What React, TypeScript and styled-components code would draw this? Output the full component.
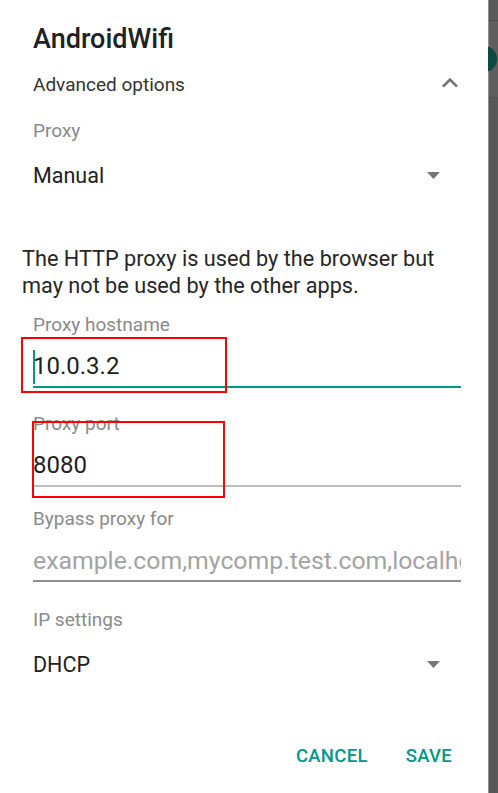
import React from 'react';
import styled, { createGlobalStyle } from 'styled-components';

const GlobalStyle = createGlobalStyle`
  html, body {
    margin: 0;
    padding: 0;
    overflow: hidden;
    background: #585858;
  }
  body {
    font-family: Roboto, "Noto Sans", "Liberation Sans", sans-serif;
  }
`;

const teal = '#009688';

const Page = styled.div`
  display: flex;
  width: 498px;
  height: 793px;
  overflow: hidden;
  background: linear-gradient(to right, #ffffff 0, #ffffff 488px, #8e8e8e 488px, #8e8e8e 489px, #585858 489px);
`;

const Dialog = styled.div`
  width: 488px;
  flex: none;
  background: #ffffff;
  padding: 20px 27px 0 33px;
  box-sizing: border-box;
  display: flex;
  flex-direction: column;
  position: relative;
  z-index: 2;
  overflow: hidden;
`;

const Backdrop = styled.div`
  flex: 1;
  min-width: 10px;
  position: relative;
  z-index: 1;
  border-left: 1px solid #8e8e8e;
  background-color: #585858;
  display: flex;
  flex-direction: column;
`;

const StatusBand = styled.div`
  height: 20px;
  background-color: #5a5a5a;
  border-bottom: 1px solid #4c4c4c;
`;

const ToolbarBand = styled.div`
  height: 76px;
  background-color: #5e5e5e;
  border-bottom: 1px solid #535353;
`;

// the FAB of the screen behind, mostly hidden by the dialog
const HiddenFab = styled.div`
  position: absolute;
  left: -18px;
  top: 46px;
  width: 26px;
  height: 26px;
  border-radius: 50%;
  background: #0b4a40;
`;

const Title = styled.div`
  height: 37px;
  display: flex;
  align-items: center;
  font-size: 27px;
  font-weight: 500;
  color: #212121;
`;

const Row = styled.div<{ $h: number }>`
  height: ${({ $h }) => $h}px;
  display: flex;
  align-items: center;
  justify-content: space-between;
`;

const SectionText = styled.span`
  font-size: 19px;
  color: #333333;
`;

const Label = styled.div<{ $mt: number }>`
  margin-top: ${({ $mt }) => $mt}px;
  height: 30px;
  display: flex;
  align-items: center;
  font-size: 19px;
  color: #8a8a8a;
`;

const SpinnerText = styled.span`
  font-size: 21.5px;
  color: #212121;
`;

const Note = styled.p`
  margin: 40px 0 0 -11px;
  font-size: 21.7px;
  line-height: 27px;
  color: #262626;
`;

const InputBox = styled.div<{ $line: string }>`
  margin-top: 7px;
  height: 40px;
  display: flex;
  align-items: center;
  border-bottom: 2px solid ${({ $line }) => $line};
  overflow: hidden;
  white-space: nowrap;
  position: relative;
`;

const InputText = styled.span<{ $placeholder?: boolean }>`
  font-size: ${({ $placeholder }) => ($placeholder ? '24.8px' : '24px')};
  color: ${({ $placeholder }) => ($placeholder ? '#a3a3a3' : '#212121')};
`;

const Caret = styled.span`
  position: absolute;
  left: 0;
  top: 4px;
  width: 2px;
  height: 34px;
  background: ${teal};
`;

const Actions = styled.div`
  margin-top: 37px;
  height: 50px;
  display: flex;
  align-items: center;
  justify-content: flex-end;
  gap: 38px;
  padding-right: 9px;
`;

const ActionButton = styled.span`
  font-size: 18.5px;
  font-weight: 500;
  letter-spacing: 0.3px;
  color: ${teal};
`;

const Highlight = styled.div<{ $x: number; $y: number; $w: number; $h: number }>`
  position: absolute;
  left: ${({ $x }) => $x}px;
  top: ${({ $y }) => $y}px;
  width: ${({ $w }) => $w}px;
  height: ${({ $h }) => $h}px;
  border: 2px solid #ff0000;
  box-sizing: border-box;
  pointer-events: none;
`;

const ChevronUp = () => (
  <svg width="32" height="32" viewBox="0 0 24 24" style={{ marginRight: -5, marginTop: -3 }}>
    <path d="M12 8l-6 6 1.41 1.41L12 10.83l4.59 4.58L18 14z" fill="#757575" />
  </svg>
);

const DropArrow = () => (
  <svg width="13" height="7" viewBox="0 0 13 7" style={{ marginRight: 21 }}>
    <polygon points="0,0 13,0 6.5,7" fill="#757575" />
  </svg>
);

export default function App() {
  return (
    <>
      <GlobalStyle />
      <Page>
        <Dialog>
          <Title>AndroidWifi</Title>
          <Row $h={54}>
            <SectionText>Advanced options</SectionText>
            <ChevronUp />
          </Row>
          <Label $mt={4}>Proxy</Label>
          <Row $h={60}>
            <SpinnerText>Manual</SpinnerText>
            <DropArrow />
          </Row>

          <Note>
            The HTTP proxy is used by the browser but may not be used by the other apps.
          </Note>

          <Label $mt={10}>Proxy hostname</Label>
          <InputBox $line={teal}>
            <Caret />
            <InputText>10.0.3.2</InputText>
          </InputBox>

          <Label $mt={20}>Proxy port</Label>
          <InputBox $line="#bdbdbd">
            <InputText>8080</InputText>
          </InputBox>

          <Label $mt={16}>Bypass proxy for</Label>
          <InputBox $line="#8f8f8f">
            <InputText $placeholder>example.com,mycomp.test.com,localhost</InputText>
          </InputBox>

          <Label $mt={22}>IP settings</Label>
          <Row $h={60}>
            <SpinnerText>DHCP</SpinnerText>
            <DropArrow />
          </Row>

          <Actions>
            <ActionButton>CANCEL</ActionButton>
            <ActionButton>SAVE</ActionButton>
          </Actions>

          <Highlight $x={21} $y={337} $w={206} $h={56} />
          <Highlight $x={32} $y={421} $w={193} $h={77} />
        </Dialog>
        <Backdrop>
          <StatusBand />
          <ToolbarBand />
          <HiddenFab />
        </Backdrop>
      </Page>
    </>
  );
}
